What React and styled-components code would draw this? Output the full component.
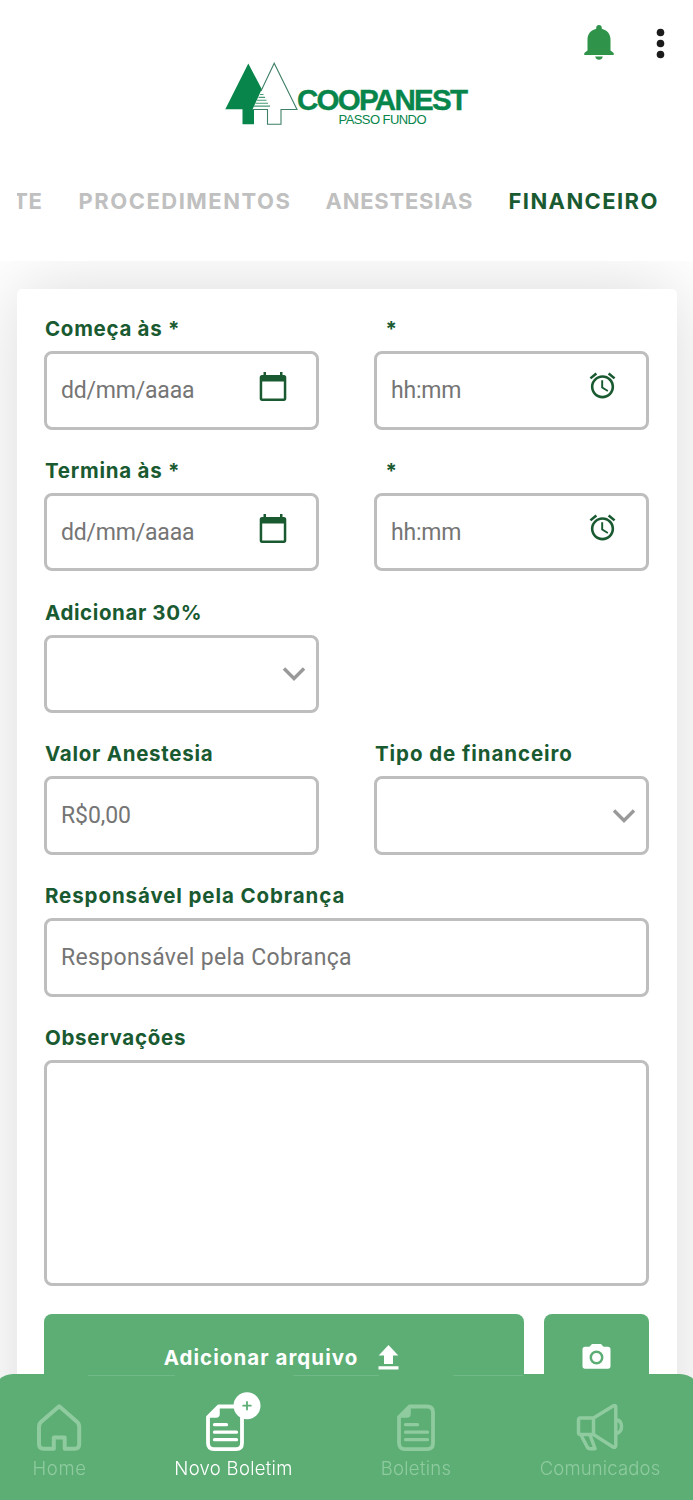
import React from 'react';
import styled, { createGlobalStyle } from 'styled-components';
import { MdAlarm } from 'react-icons/md';

const GlobalStyle = createGlobalStyle`
  * { box-sizing: border-box; }
  body { margin: 0; background: #fff; font-family: Inter, "Open Sans", sans-serif; }
`;

const green = '#5cae75';
const dark = '#195a31';

const Screen = styled.div`
  width: 693px;
  height: 1500px;
  overflow: hidden;
  display: flex;
  flex-direction: column;
  background: #fff;
`;

const Header = styled.header`
  position: relative;
  z-index: 1;
  flex: none;
  height: 261px;
  background: #fff;
  display: flex;
  flex-direction: column;
`;

const Actions = styled.div`
  height: 62px;
  padding: 24px 28px 0 0;
  display: flex;
  justify-content: flex-end;
  gap: 42px;
  svg { display: block; }
`;

const LogoRow = styled.div`
  height: 66px;
  padding-left: 224px;
  svg { display: block; }
`;

const Tabs = styled.nav`
  margin: 57px 17px 0;
  height: 32px;
  display: flex;
  justify-content: flex-end;
  gap: 36px;
  padding-right: 17px;
  overflow: hidden;
`;

const Tab = styled.span`
  flex: none;
  width: ${p => p.$w}px;
  font-size: 22px;
  line-height: 32px;
  font-weight: 700;
  white-space: nowrap;
  letter-spacing: ${p => p.$track}px;
  color: ${p => (p.$active ? dark : '#c0c0c0')};
`;

const Main = styled.main`
  flex: 1;
  min-height: 0;
  padding: 28px 16px 0 17px;
`;

const Card = styled.section`
  height: 1300px;
  padding: 28px 28px 0 27px;
  border-radius: 5px;
  background: #fff;
  box-shadow: 0 0 72px rgba(0, 0, 0, 0.15);
  display: flex;
  flex-direction: column;
  gap: 29.25px;
`;

const Row = styled.div`
  display: grid;
  grid-template-columns: ${p => (p.$single ? '1fr' : '275px 275px')};
  justify-content: space-between;
`;

const Field = styled.label`
  display: flex;
  flex-direction: column;
  gap: 10px;
`;

const Label = styled.span`
  height: 24px;
  padding-left: ${p => p.$indent || 1}px;
  font-size: 20.5px;
  line-height: 24px;
  font-weight: 700;
  white-space: pre;
  letter-spacing: ${p => p.$track || 0}px;
  color: ${dark};
`;

const Box = styled.div`
  height: ${p => p.$h || 78.5}px;
  border: 3px solid #bebebe;
  border-radius: 8px;
  padding: 0 ${p => p.$right || 10}px 0 14px;
  display: flex;
  align-items: center;
  justify-content: space-between;
  font-family: Roboto, sans-serif;
  font-size: 23px;
  letter-spacing: ${p => p.$track || 0}px;
  color: #757575;
`;

const IconSlot = styled.span`
  display: flex;
  margin-top: ${p => p.$shift || 0}px;
  margin-left: auto;
`;

const Buttons = styled.div`
  display: flex;
  justify-content: space-between;
  margin-top: -1px;
`;

const Button = styled.button`
  width: ${p => p.$w}px;
  height: ${p => p.$h || 86}px;
  border: 0;
  padding: 0 ${p => p.$right || 0}px 0 0;
  border-radius: 8px;
  background: ${green};
  color: #fff;
  display: flex;
  align-items: center;
  justify-content: center;
  gap: 20px;
  font-family: inherit;
  font-size: 20.5px;
  font-weight: 700;
  letter-spacing: ${p => p.$track || 0}px;
`;

const BottomBar = styled.nav`
  position: fixed;
  z-index: 2;
  top: 1374px;
  left: -7px;
  width: 707px;
  height: 126px;
  padding: 18px 40px 0;
  border-radius: 20px 20px 0 0;
  background:
    linear-gradient(90deg, transparent 95px, #70b986 95px 182px, transparent 182px 300px, #70b986 300px 386px, transparent 386px 460px, #70b986 460px 530px, transparent 530px)
    0 1px / 100% 1px no-repeat,
    ${green};
  display: flex;
  justify-content: space-between;
`;

const NavItem = styled.a`
  width: ${p => p.$w}px;
  display: flex;
  flex-direction: column;
  align-items: center;
  color: ${p => (p.$active ? '#fff' : '#8fcb9f')};
  svg { display: block; flex: none; }
`;

const NavText = styled.span`
  margin-top: 4px;
  font-size: 18.5px;
  line-height: 24px;
  font-weight: 300;
  white-space: nowrap;
  letter-spacing: ${p => p.$track || 0}px;
`;

const Bell = () => (
  <svg width="30" height="36" viewBox="0 0 30 36" fill="#2f944a">
    <path d="M15 1c1.700 0 2.800 1.200 2.800 2.800v.9c5.300 1.400 8.700 5.300 8.700 10.700V26.500l3.200 2.600V31H.3v-1.900L3.500 26.500V15.400C3.500 10 6.900 6.100 12.200 4.700v-.9C12.200 2.200 13.300 1 15 1z" />
    <path d="M11.200 32.500h7.600c-.5 2.100-1.900 3.300-3.800 3.300s-3.300-1.200-3.800-3.300z" />
  </svg>
);

const Dots = () => (
  <svg width="9" height="36" viewBox="0 0 9 36" fill="#1b1b1b">
    <circle cx="4.500" cy="8.500" r="3.800" />
    <circle cx="4.500" cy="19.500" r="3.800" />
    <circle cx="4.500" cy="30.500" r="3.800" />
  </svg>
);

const Logo = () => (
  <svg width="246" height="66" viewBox="224 62 246 66" fontFamily="'Liberation Sans', Arial, sans-serif" fill="#07854a">
    <path d="M248.300 63.500 225.300 109.300H242.500V124.300H254V109.300L263 91.500z" />
    <path d="M260 93 274.200 63.200 297 109.500H281V124.300H267.500V109.500H252.500L260 93z" fill="#fff" />
    <path d="M261 91 274.200 63.200 297 109.500H281V124.300H267.500V109.500H252.500" fill="none" stroke="#3f8066" strokeWidth="1.100" />
    <path d="M260 94.500h3.500M258.500 97.400h6.500M257 100.300h9.500M255.500 103.200h12.500M254 106.100h16" stroke="#4a9a74" strokeWidth="1.100" />
    <text x="297" y="110" fontSize="29.500" fontWeight="700" stroke="#07854a" strokeWidth=".4" textLength="171" lengthAdjust="spacing">COOPANEST</text>
    <text x="338.500" y="124" fontSize="13" textLength="88" lengthAdjust="spacing">PASSO FUNDO</text>
  </svg>
);

const Calendar = () => (
  <svg width="28" height="31" viewBox="0 0 28 31" fill={dark}>
    <path d="M4.500 1h2.500v3h14V1h2.500v3H25c1.500 0 2.300 1 2.300 2.500V27.500c0 1.500-.8 2.500-2.300 2.500H3C1.500 30 .7 29 .7 27.500V6.500C.7 5 1.500 4 3 4h1.500zM3.200 10.500v17h21.600V10.500z" fillRule="evenodd" />
  </svg>
);

const Chevron = () => (
  <svg width="24" height="16" viewBox="0 0 24 16" fill="none" stroke="#999" strokeWidth="3.400">
    <path d="m2 2.500 10 10 10-10" />
  </svg>
);

const Upload = () => (
  <svg width="21" height="25" viewBox="0 0 21 25" fill="#fff">
    <path d="M10.500 0 20.300 10.500H15V19H6V10.500H.7zM.5 21.200h20V24.500H.5z" />
  </svg>
);

const Camera = () => (
  <svg width="29" height="27" viewBox="0 0 29 27">
    <path d="M10 1h9l2.600 2.800H26c1.500 0 2.500 1 2.500 2.500v17c0 1.500-1 2.500-2.500 2.500H3c-1.500 0-2.500-1-2.500-2.500v-17c0-1.500 1-2.500 2.500-2.500h4.400z" fill="#fff" />
    <circle cx="14.500" cy="14.500" r="5.700" fill="#fff" stroke={green} strokeWidth="2.500" />
  </svg>
);

const House = () => (
  <svg width="46" height="60" viewBox="37 1392 46 60" fill="none" stroke="currentColor" strokeWidth="4" strokeLinejoin="round">
    <path d="M59.200 1406.300 41.500 1421.500Q39 1423.600 39 1427V1444Q39 1448.700 43.500 1448.700H53.800V1437.500H64.700V1448.700H75Q79.200 1448.700 79.200 1444V1427Q79.200 1423.600 76.700 1421.500z" />
  </svg>
);

const Paper = ({ badge }) => (
  <svg width={badge ? 56 : 40} height="60" viewBox={`${badge ? 1 : 0} -12 ${badge ? 56 : 40} 60`} fill="none" stroke="currentColor" strokeWidth="3.800" strokeLinecap="round" strokeLinejoin="round">
    <path d="M13.500 2H31Q37 2 37 8V38.500Q37 44.700 31 44.700H9Q3 44.700 3 38.500V12.500z" strokeWidth="3.800" transform="translate(0 .5)" />
    <path d="M14 3V10Q14 13 11 13H4z" fill="currentColor" strokeWidth="1.500" />
    <path d="M9.500 20.700h12M9.500 28.200h22M9.500 35.700h22" strokeWidth="3.300" />
    {badge && (
      <>
        <circle cx="42" cy="1.700" r="13.500" fill="#fff" stroke="none" />
        <path d="M42-2.100v7.600M38.200 1.700h7.600" stroke={green} strokeWidth="1.800" />
      </>
    )}
  </svg>
);

const Megaphone = () => (
  <svg width="50" height="60" viewBox="574.500 1392 50 60" fill="none" stroke="currentColor" strokeWidth="3.500" strokeLinejoin="round">
    <path d="M593 1418 613 1405.800Q615.300 1404.800 615.300 1407.500V1445Q615.300 1448.300 612.500 1447L593 1434.500M593 1418H579.800Q578 1418 578 1420V1432.500Q578 1434.500 580 1434.500H593zM580.500 1435 586.500 1446.500Q587.500 1448.700 590 1448.700H594.500L589.500 1435M615.500 1419.500Q621 1420.500 621 1426.500T615.500 1433.500" />
  </svg>
);

const DateTimeRow = ({ label, track }) => (
  <Row>
    <Field>
      <Label $track={track}>{label}</Label>
      <Box $right={29.5} $track={-0.2}>dd/mm/aaaa<IconSlot $shift={-8}><Calendar /></IconSlot></Box>
    </Field>
    <Field>
      <Label $indent={11.5}>*</Label>
      <Box $right={28} $track={-0.2}>hh:mm<IconSlot $shift={-9}><MdAlarm size={31} color={dark} /></IconSlot></Box>
    </Field>
  </Row>
);

export default function App() {
  return (
    <Screen>
      <GlobalStyle />
      <Header>
        <Actions><Bell /><Dots /></Actions>
        <LogoRow><Logo /></LogoRow>
        <Tabs>
          <Tab $w={114} $track={0.7}>PACIENTE</Tab>
          <Tab $w={211} $track={1.5}>PROCEDIMENTOS</Tab>
          <Tab $w={147} $track={0.75}>ANESTESIAS</Tab>
          <Tab $w={150.5} $track={1.4} $active>FINANCEIRO</Tab>
        </Tabs>
      </Header>
      <Main>
        <Card>
          <DateTimeRow label="Começa às *" track={0.7} />
          <DateTimeRow label="Termina às *" track={0.75} />
          <Row>
            <Field>
              <Label $track={0.6}>Adicionar 30%</Label>
              <Box><IconSlot><Chevron /></IconSlot></Box>
            </Field>
          </Row>
          <Row>
            <Field>
              <Label $track={0.72}>Valor Anestesia</Label>
              <Box $track={-0.1}>R$0,00</Box>
            </Field>
            <Field>
              <Label $track={0.93}>Tipo de financeiro</Label>
              <Box><IconSlot><Chevron /></IconSlot></Box>
            </Field>
          </Row>
          <Row $single>
            <Field>
              <Label $track={0.9}>Responsável pela Cobrança</Label>
              <Box $track={0.33}>Responsável pela Cobrança</Box>
            </Field>
          </Row>
          <Row $single>
            <Field>
              <Label $track={0.7}>Observações</Label>
              <Box $h={226} />
            </Field>
          </Row>
          <Buttons>
            <Button $w={480} $right={5} $track={1.05}>Adicionar arquivo<Upload /></Button>
            <Button $w={105} $h={84}><Camera /></Button>
          </Buttons>
        </Card>
      </Main>
      <BottomBar>
        <NavItem $w={53}><House /><NavText $track={0.6}>Home</NavText></NavItem>
        <NavItem $w={117} $active><Paper badge /><NavText $track={0.3}>Novo Boletim</NavText></NavItem>
        <NavItem $w={70}><Paper /><NavText $track={0.3}>Boletins</NavText></NavItem>
        <NavItem $w={120}><Megaphone /><NavText $track={0.15}>Comunicados</NavText></NavItem>
      </BottomBar>
    </Screen>
  );
}
